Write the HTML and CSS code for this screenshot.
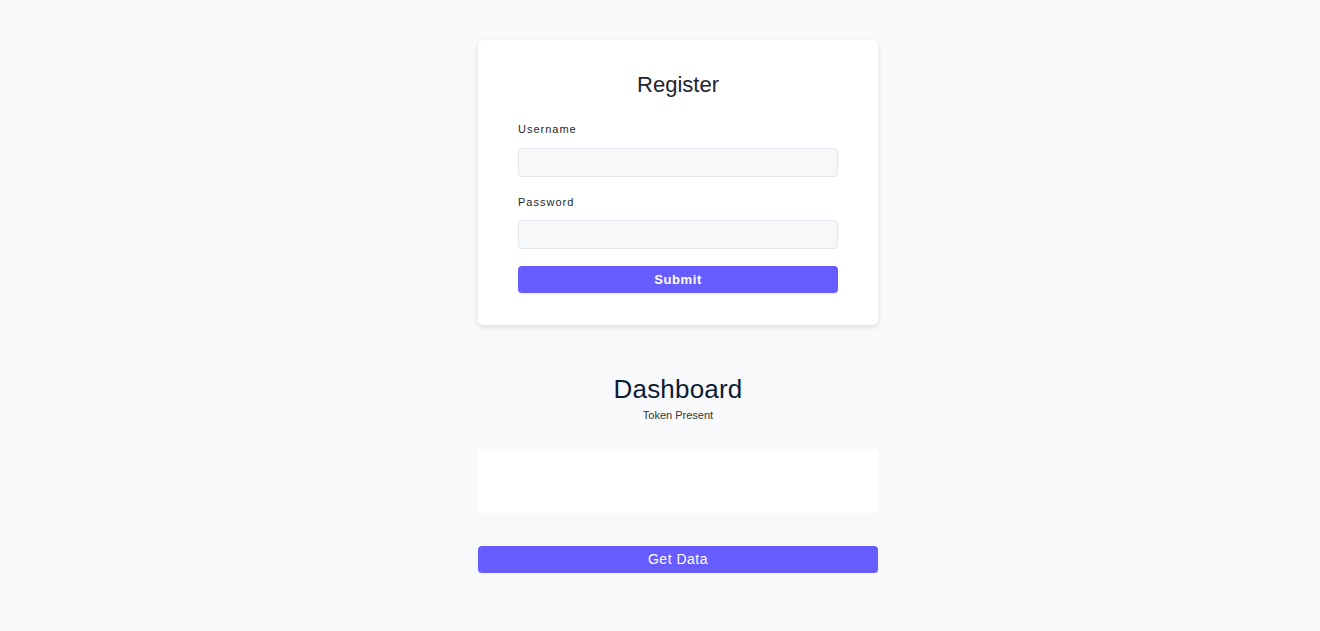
FILE: index.html
```html
<!DOCTYPE html>
<html>
<head>
<meta charset="utf-8">
<link rel="stylesheet" href="styles.css">
</head>
<body>
<div class="page">
  <div class="column">
    <form class="card">
      <h2 class="card-title">Register</h2>
      <div class="field">
        <label class="label">Username</label>
        <input class="input" type="text">
      </div>
      <div class="field">
        <label class="label">Password</label>
        <input class="input" type="password">
      </div>
      <button class="btn" type="button">Submit</button>
    </form>
    <section class="dashboard">
      <h1 class="dash-title">Dashboard</h1>
      <p class="token">Token Present</p>
      <div class="data-box"></div>
      <button class="btn btn-data" type="button">Get Data</button>
    </section>
  </div>
</div>
</body>
</html>
```
FILE: styles.css
```css
html, body {
  margin: 0;
  padding: 0;
  background: #f8f9fb;
  font-family: "Liberation Sans", Arial, sans-serif;
}
.page {
  display: flex;
  justify-content: center;
  padding: 40px 0 0 36px;
}
.column {
  width: 400px;
  display: flex;
  flex-direction: column;
}
.card {
  background: #ffffff;
  border-radius: 5px;
  box-shadow: 0 2px 5px rgba(0, 0, 0, 0.12);
  padding: 32px 40px 32px;
  display: flex;
  flex-direction: column;
}
.card-title {
  margin: 0 0 25px;
  font-size: 22px;
  line-height: 26px;
  font-weight: 400;
  text-align: center;
  color: #1f2433;
}
.field {
  display: flex;
  flex-direction: column;
  margin-bottom: 19px;
}
.field + .field {
  margin-bottom: 17px;
}
.field + .field .label {
  margin-bottom: 11px;
}
.label {
  font-size: 11px;
  line-height: 13px;
  letter-spacing: 1px;
  color: #1a1f2e;
  margin-bottom: 12px;
}
.input {
  box-sizing: border-box;
  height: 29px;
  border: 1px solid #e2e6ee;
  border-radius: 4px;
  background: #f7f8fa;
  margin: 0;
  padding: 0 8px;
  outline: none;
}
.btn {
  box-sizing: border-box;
  height: 27px;
  border: 0;
  border-radius: 4px;
  background: #675dff;
  color: #ffffff;
  font-family: "Liberation Sans", Arial, sans-serif;
  font-size: 13px;
  font-weight: 700;
  letter-spacing: 0.6px;
  cursor: pointer;
  box-shadow: 0 1px 2px rgba(0, 0, 0, 0.08);
  padding: 0;
}
.dashboard {
  display: flex;
  flex-direction: column;
  margin-top: 49px;
}
.dash-title {
  margin: 0;
  font-size: 26px;
  line-height: 30px;
  font-weight: 400;
  letter-spacing: 0.2px;
  text-align: center;
  color: #0d1b33;
}
.token {
  margin: 5px 0 0;
  font-size: 11px;
  line-height: 13px;
  text-align: center;
  color: #2c3a36;
}
.data-box {
  margin-top: 27px;
  height: 64px;
  background: #ffffff;
  border-radius: 4px;
}
.btn-data {
  margin-top: 33px;
  padding-bottom: 2px;
  font-size: 14px;
  font-weight: 400;
  letter-spacing: 0.5px;
}
```
